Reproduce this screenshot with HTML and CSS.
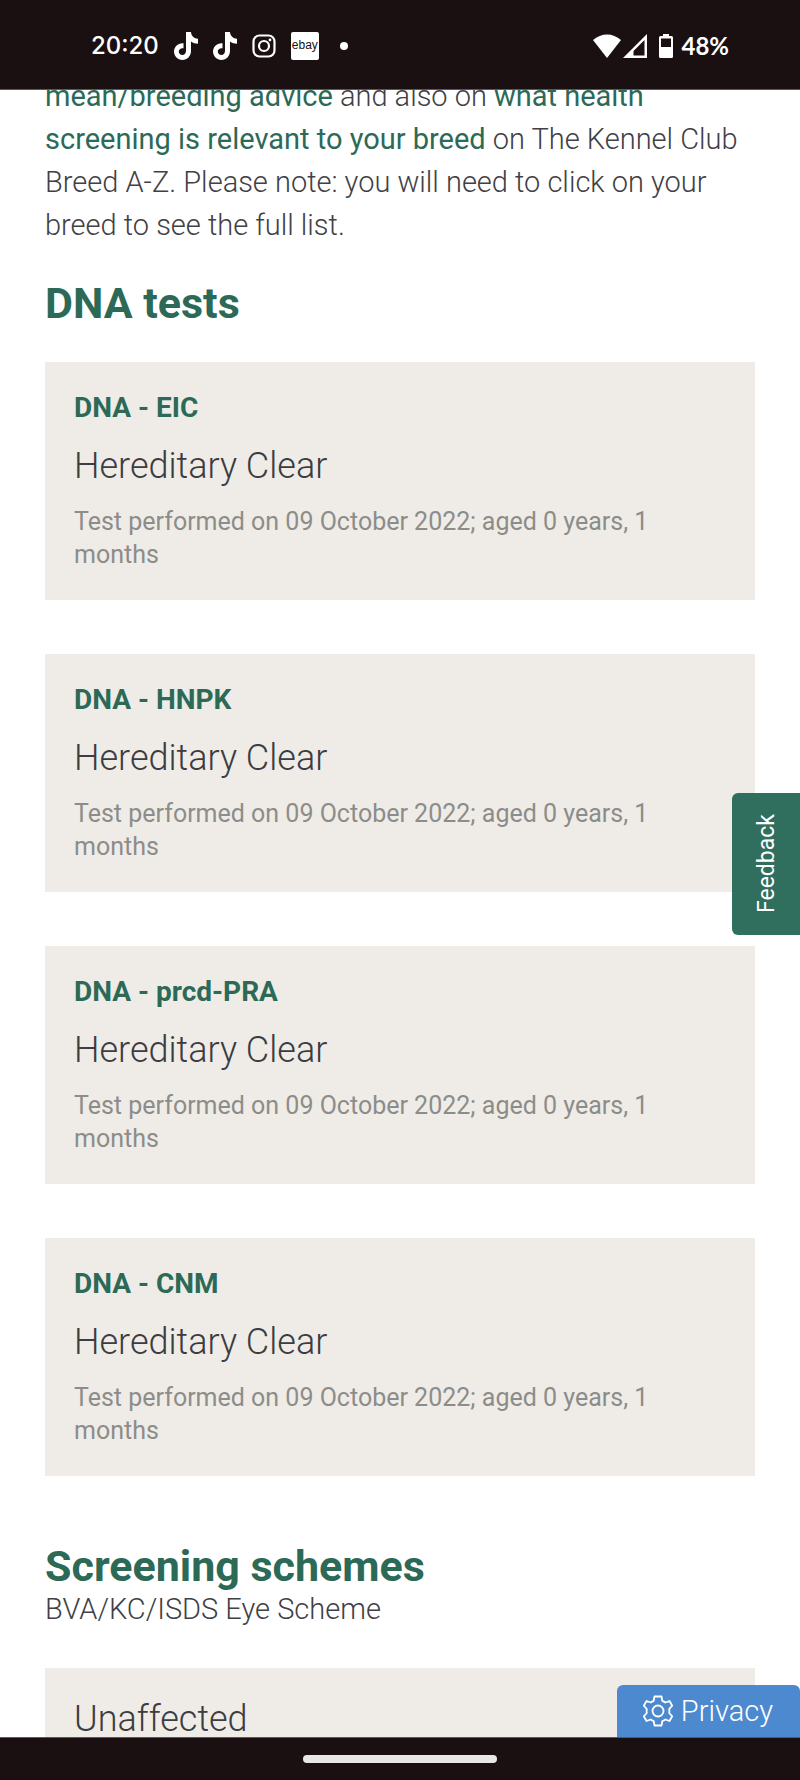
FILE: index.html
```html
<!DOCTYPE html>
<html lang="en">
<head>
    <meta charset="UTF-8">
    <meta name="viewport" content="width=device-width, initial-scale=1.0">
    <title>Health test results</title>
    <link rel="stylesheet" href="styles.css">
</head>
<body>
    <header class="status-bar">
        <div class="status-left">
            <span class="clock">20:20</span>
            <svg class="icon-app" viewBox="0 0 24 28" aria-hidden="true"><path fill="#fff" d="M12 0h5c.3 4 3 6.500 7 6.800v5c-2.700 0-5-.8-7-2.200v9.400c0 5-3.800 9-8.500 9S0 24 0 19.500s4-8.700 9.500-8.200v5c-2.500-.6-4.700 1-4.700 3.200s1.700 3.500 3.600 3.500c2.200 0 3.600-1.700 3.600-4z"/></svg>
            <svg class="icon-app" viewBox="0 0 24 28" aria-hidden="true"><path fill="#fff" d="M12 0h5c.3 4 3 6.500 7 6.800v5c-2.700 0-5-.8-7-2.200v9.400c0 5-3.800 9-8.500 9S0 24 0 19.500s4-8.700 9.500-8.200v5c-2.500-.6-4.700 1-4.700 3.200s1.700 3.500 3.600 3.500c2.200 0 3.600-1.700 3.600-4z"/></svg>
            <svg class="icon-camera" viewBox="0 0 24 24" fill="none" stroke="#fff" stroke-width="2.200" aria-hidden="true"><rect x="1.500" y="1.500" width="21" height="21" rx="6"/><circle cx="12" cy="12" r="5"/><circle cx="18" cy="6" r="1.400" fill="#fff" stroke="none"/></svg>
            <span class="ebay">ebay</span>
            <span class="dot"></span>
        </div>
        <div class="status-right">
            <svg class="icon-wifi" viewBox="0 0 28 24" aria-hidden="true"><path fill="#fff" d="M0 6C8-1.500 20-1.500 28 6L14 24z"/></svg>
            <svg class="icon-signal" viewBox="0 0 24 24" aria-hidden="true"><path fill="#fff" fill-rule="evenodd" d="M24 0v24H0zM21.500 6L10.500 17v4.500h11z"/></svg>
            <svg class="icon-battery" viewBox="0 0 14 24" aria-hidden="true"><path fill="#fff" fill-rule="evenodd" d="M4 0h6v2h2.500Q14 2 14 3.500v19q0 1.500-1.500 1.500h-11Q0 24 0 22.500v-19Q0 2 1.500 2H4zM2 4.500v8.500h10V4.500z"/></svg>
            <span class="percent">48%</span>
        </div>
    </header>

    <div class="viewport">
        <main class="content">
            <p class="intro"><a href="#advice">mean/breeding advice</a> and also on <a href="#screening">what health screening is relevant to your breed</a> on The Kennel Club Breed A-Z. Please note: you will need to click on your breed to see the full list.</p>

            <h2>DNA tests</h2>
            <div class="cards">
                <section class="card">
                    <h3>DNA - EIC</h3>
                    <p class="result">Hereditary Clear</p>
                    <p class="performed">Test performed on 09 October 2022; aged 0 years, 1 months</p>
                </section>
                <section class="card">
                    <h3>DNA - HNPK</h3>
                    <p class="result">Hereditary Clear</p>
                    <p class="performed">Test performed on 09 October 2022; aged 0 years, 1 months</p>
                </section>
                <section class="card">
                    <h3>DNA - prcd-PRA</h3>
                    <p class="result">Hereditary Clear</p>
                    <p class="performed">Test performed on 09 October 2022; aged 0 years, 1 months</p>
                </section>
                <section class="card">
                    <h3>DNA - CNM</h3>
                    <p class="result">Hereditary Clear</p>
                    <p class="performed">Test performed on 09 October 2022; aged 0 years, 1 months</p>
                </section>
            </div>

            <h2 class="schemes">Screening schemes</h2>
            <p class="scheme-name">BVA/KC/ISDS Eye Scheme</p>
            <section class="card">
                <p class="result">Unaffected</p>
            </section>
        </main>

        <button class="feedback" type="button">Feedback</button>
        <button class="privacy" type="button">
            <svg viewBox="0 0 30 32" fill="none" stroke="#fff" stroke-width="1.800" stroke-linejoin="round" aria-hidden="true"><path d="M11.500 1.500h7l.8 4.300q1.600.6 3 1.700l4.200-1.500 2.700 4.700-3 3.300q.4 2 0 4l3 3.300-2.700 4.700-4.200-1.500q-1.400 1.100-3 1.700l-.8 4.300h-7l-.8-4.300q-1.600-.6-3-1.700L3.500 26 .8 21.300l3-3.300q-.4-2 0-4l-3-3.300L3.500 6l4.200 1.500q1.400-1.100 3-1.700z"/><circle cx="15" cy="16" r="5.500"/></svg>
            Privacy
        </button>
    </div>

    <footer class="nav-bar"><span class="handle"></span></footer>
</body>
</html>
```
FILE: styles.css
```css
* {
    box-sizing: border-box;
}

body {
    margin: 0;
    height: 100vh;
    display: flex;
    flex-direction: column;
    background: #fff;
    color: #414045;
    font-family: Roboto, "Liberation Sans", sans-serif;
    font-size: 29px;
    font-weight: 300;
}

h2, h3, p {
    margin: 0;
}

/* phone status bar */
.status-bar {
    flex: none;
    height: 90px;
    padding: 2px 71px 0 91px;
    display: flex;
    align-items: center;
    justify-content: space-between;
    background: #1a1011;
    border-bottom: 1px solid #5f585a;
    color: #fff;
    font-family: Inter, sans-serif;
    font-size: 24px;
    font-weight: 500;
}

.status-left, .status-right {
    display: flex;
    align-items: center;
}

.status-left {
    gap: 15px;
}

.icon-app {
    width: 24px;
    height: 28px;
}

.icon-camera {
    width: 24px;
    height: 24px;
}

.ebay {
    width: 28px;
    height: 28px;
    border-radius: 2px;
    background: #fff;
    color: #1a1011;
    font-family: "Liberation Sans", sans-serif;
    font-size: 12px;
    line-height: 26px;
    text-align: center;
}

.dot {
    width: 8px;
    height: 8px;
    margin-left: 6px;
    border-radius: 50%;
    background: #fff;
}

.icon-wifi {
    width: 28px;
    height: 24px;
}

.icon-signal {
    width: 24px;
    height: 24px;
    margin-left: 2px;
}

.icon-battery {
    width: 14px;
    height: 24px;
    margin: 0 8px 0 12px;
}

.percent {
    font-family: Lato, sans-serif;
    font-weight: 700;
}

/* scrolled page */
.viewport {
    flex: 1;
    min-height: 0;
    position: relative;
    overflow: hidden;
}

.content {
    margin-top: -15px;
    padding: 0 45px;
}

.intro {
    line-height: 43px;
}

.intro a {
    color: #2c6a57;
    font-weight: 400;
    text-decoration: none;
}

h2 {
    margin: 30px 0 33px;
    color: #2c6a57;
    font-size: 43px;
    font-weight: 700;
    line-height: 52px;
}

.cards {
    display: grid;
    gap: 54px;
}

.card {
    padding: 29px;
    background: #efece7;
}

h3 {
    color: #2c6a57;
    font-size: 28px;
    font-weight: 700;
    line-height: 34px;
}

.result {
    color: #3c3c41;
    font-size: 36px;
    line-height: 44px;
}

h3 + .result {
    margin: 19px 0 17px;
}

.performed {
    color: #8c8d8a;
    font-size: 25px;
    font-weight: 400;
    line-height: 33px;
}

.schemes {
    margin: 64px 0 0;
}

.scheme-name {
    margin-bottom: 42px;
    line-height: 34px;
}

.feedback, .privacy {
    position: absolute;
    right: 0;
    border: 0;
    color: #fff;
    cursor: pointer;
}

.feedback {
    top: 703px;
    width: 68px;
    height: 142px;
    border-radius: 0 6px 6px 0;
    background: #306f5e;
    font: 400 23px Roboto, sans-serif;
    writing-mode: vertical-rl;
    transform: rotate(180deg);
}

.privacy {
    bottom: 0;
    padding: 8px 27px 8px 26px;
    display: flex;
    align-items: center;
    gap: 8px;
    border-radius: 6px 6px 0 0;
    background: #4d89cf;
    font: 300 29px/36px Roboto, sans-serif;
}

.privacy svg {
    width: 30px;
    height: 32px;
}

/* gesture bar */
.nav-bar {
    flex: none;
    height: 43px;
    display: flex;
    align-items: center;
    justify-content: center;
    background: #1a1011;
    border-top: 1px solid #5f585a;
}

.handle {
    width: 194px;
    height: 8px;
    border-radius: 4px;
    background: #e8e6e7;
}
```
